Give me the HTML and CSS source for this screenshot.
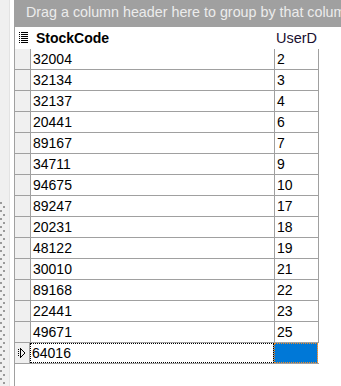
FILE: index.html
```html
<!DOCTYPE html>
<html lang="en">
<head>
  <meta charset="UTF-8" />
  <title>Stock grid</title>
  <link rel="stylesheet" href="styles.css">
</head>
<body>
  <div class="page">
    <div class="splitter">
      <div class="grip"></div>
    </div>

    <div class="grid">
      <div class="group-bar">Drag a column header here to group by that column</div>

      <div class="row header">
        <div class="ind">
          <svg width="9" height="12" viewBox="0 0 9 12">
            <g fill="#000">
              <rect x="0" y="0" width="1" height="1"/><rect x="2" y="0" width="7" height="1"/>
              <rect x="0" y="2" width="1" height="1"/><rect x="2" y="2" width="7" height="1"/>
              <rect x="0" y="4" width="1" height="1"/><rect x="2" y="4" width="7" height="1"/>
              <rect x="0" y="6" width="1" height="1"/><rect x="2" y="6" width="7" height="1"/>
              <rect x="0" y="8" width="1" height="1"/><rect x="2" y="8" width="7" height="1"/>
              <rect x="0" y="10" width="1" height="1"/><rect x="2" y="10" width="7" height="1"/>
            </g>
          </svg>
        </div>
        <div class="cell code head-code">StockCode</div>
        <div class="cell user head-user">UserD</div>
      </div>

      <div class="row"><div class="ind"></div><div class="cell code">32004</div><div class="cell user">2</div></div>
      <div class="row"><div class="ind"></div><div class="cell code">32134</div><div class="cell user">3</div></div>
      <div class="row"><div class="ind"></div><div class="cell code">32137</div><div class="cell user">4</div></div>
      <div class="row"><div class="ind"></div><div class="cell code">20441</div><div class="cell user">6</div></div>
      <div class="row"><div class="ind"></div><div class="cell code">89167</div><div class="cell user">7</div></div>
      <div class="row"><div class="ind"></div><div class="cell code">34711</div><div class="cell user">9</div></div>
      <div class="row"><div class="ind"></div><div class="cell code">94675</div><div class="cell user">10</div></div>
      <div class="row"><div class="ind"></div><div class="cell code">89247</div><div class="cell user">17</div></div>
      <div class="row"><div class="ind"></div><div class="cell code">20231</div><div class="cell user">18</div></div>
      <div class="row"><div class="ind"></div><div class="cell code">48122</div><div class="cell user">19</div></div>
      <div class="row"><div class="ind"></div><div class="cell code">30010</div><div class="cell user">21</div></div>
      <div class="row"><div class="ind"></div><div class="cell code">89168</div><div class="cell user">22</div></div>
      <div class="row"><div class="ind"></div><div class="cell code">22441</div><div class="cell user">23</div></div>
      <div class="row"><div class="ind"></div><div class="cell code">49671</div><div class="cell user">25</div></div>

      <!-- new row, focused -->
      <div class="row current">
        <div class="ind">
          <svg width="8" height="10" viewBox="0 0 8 10">
            <g fill="#000">
              <rect x="0" y="1" width="1" height="1"/><rect x="0" y="3" width="1" height="1"/>
              <rect x="0" y="5" width="1" height="1"/><rect x="0" y="7" width="1" height="1"/>
              <rect x="2" y="0" width="1" height="10"/>
              <rect x="3" y="1" width="1" height="1"/><rect x="4" y="2" width="1" height="1"/>
              <rect x="5" y="3" width="1" height="1"/><rect x="6" y="4" width="1" height="2"/>
              <rect x="5" y="6" width="1" height="1"/><rect x="4" y="7" width="1" height="1"/>
              <rect x="3" y="8" width="1" height="1"/>
            </g>
          </svg>
        </div>
        <div class="cell code focus">64016</div>
        <div class="cell user selected"></div>
      </div>
    </div>
  </div>
</body>
</html>
```

FILE: styles.css
```css
body {
  margin: 0;
  background-color: #fff;
  font-family: 'Liberation Sans', Arial, sans-serif;
  font-size: 14px;
  color: #000;
}
.page {
  display: flex;
  height: 386px;
  overflow: hidden;
}
.splitter {
  width: 9px;
  flex: none;
  background-color: #f0f0f0;
  border-right: 1px solid #e3e3e3;
  position: relative;
}
.grip {
  position: absolute;
  left: 0;
  top: 202px;
  width: 6px;
  bottom: 0;
  background-image:
    linear-gradient(#9a9a9a 2px, transparent 2px),
    linear-gradient(#9a9a9a 2px, transparent 2px);
  background-size: 2px 8px, 2px 8px;
  background-position: 0 0, 3px 4px;
  background-repeat: repeat-y;
}
.grid {
  flex: 1;
  margin-left: 4px;
  border-left: 1px solid #a0a0a0;
  background-color: #fff;
}
.group-bar {
  height: 27px;
  line-height: 25px;
  background-color: #a0a0a0;
  color: #ececec;
  padding-left: 11px;
  font-size: 14.3px;
  white-space: nowrap;
  overflow: hidden;
}
.row {
  display: flex;
  height: 20px;
  border-bottom: 1px solid #a0a0a0;
  width: 304px;
}
.row.header {
  height: 22px;
  border-bottom: none;
}
.ind {
  width: 15px;
  flex: none;
  background-color: #f0f0f0;
  border-right: 1px solid #a0a0a0;
  display: flex;
  align-items: center;
  justify-content: center;
}
.header .ind {
  background-color: #fff;
  border-right: none;
  width: 16px;
  padding-left: 4px;
  box-sizing: border-box;
  justify-content: flex-start;
}
.cell {
  line-height: 20px;
  padding-left: 2px;
  white-space: nowrap;
  overflow: hidden;
  box-sizing: border-box;
}
.code {
  width: 244px;
  border-right: 1px solid #a0a0a0;
}
.user {
  width: 44px;
  border-right: 1px solid #a0a0a0;
}
.header .cell {
  line-height: 22px;
  border-right: none;
}
.head-code {
  font-weight: bold;
  padding-left: 5px;
}
.head-user {
  padding-left: 1px;
  font-size: 14.5px;
  color: #1a1030;
}
.current .ind {
  justify-content: flex-start;
  padding-left: 3px;
  box-sizing: border-box;
}
.focus {
  outline: 1px dotted #000;
  outline-offset: -1px;
}
.selected {
  background-color: #0078d7;
  outline: 1px dotted #f08a24;
  outline-offset: -1px;
}
```
